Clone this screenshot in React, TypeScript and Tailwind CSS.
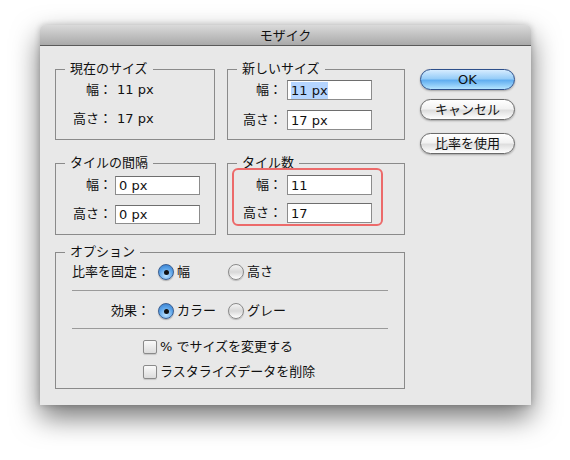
const FONT = "font-['DejaVu_Sans','Noto_Sans_CJK_JP',sans-serif]";

function Field({ label, value, selected }: { label: string; value: string; selected?: boolean }) {
  return (
    <div className="flex items-center h-[20px]">
      <span className="w-[54px] text-right shrink-0">{label}</span>
      <div className="ml-[5px] w-[85px] h-[20px] bg-white border border-[#8c8c8c] border-t-[#6e6e6e] flex items-center pl-[3px] leading-none">
        <span className={selected ? 'bg-[#b5d5ff] py-[2px]' : ''}>{value}</span>
      </div>
    </div>
  );
}

function Group({ title, width, children }: { title: string; width: string; children: React.ReactNode }) {
  return (
    <fieldset className={`${width} border border-[#8a8a8a] relative`}>
      <legend className="ml-[9px] px-[5px] leading-[16px]">{title}</legend>
      {children}
    </fieldset>
  );
}

function Radio({ checked, label, width }: { checked?: boolean; label: string; width?: string }) {
  return (
    <div className={`flex items-center ${width ?? ''}`}>
      {checked ? (
        <span className="w-[16px] h-[16px] rounded-full border border-[#3a5f92] bg-[radial-gradient(circle_at_50%_75%,#bfe4ff_0%,#5ba3e8_55%,#2f78cc_100%)] flex items-center justify-center shadow-[0_1px_1px_rgba(0,0,0,0.25)]">
          <span className="w-[5px] h-[5px] rounded-full bg-[#111]" />
        </span>
      ) : (
        <span className="w-[16px] h-[16px] rounded-full border border-[#8a8a8a] bg-[linear-gradient(#f4f4f4,#d8d8d8_50%,#ffffff)] shadow-[0_1px_1px_rgba(0,0,0,0.2)]" />
      )}
      <span className="ml-[3px]">{label}</span>
    </div>
  );
}

function Check({ label }: { label: string }) {
  return (
    <div className="flex items-center h-[20px] pl-[71px]">
      <span className="w-[14px] h-[14px] rounded-[2px] border border-[#8a8a8a] bg-[linear-gradient(#fafafa,#dcdcdc)] shadow-[0_1px_1px_rgba(0,0,0,0.15)]" />
      <span className="ml-[3px]">{label}</span>
    </div>
  );
}

function AquaButton({ label, primary }: { label: string; primary?: boolean }) {
  return (
    <button
      type="button"
      className={`w-[95px] h-[21px] rounded-full border text-[13px] leading-none shadow-[0_1px_2px_rgba(0,0,0,0.3)] ${
        primary
          ? 'border-[#2d4f8a] bg-[linear-gradient(#d6ecff_0%,#97cdf8_45%,#62aef0_55%,#b4e4ff_100%)]'
          : 'border-[#6a6a6a] bg-[linear-gradient(#ffffff_0%,#f2f2f2_45%,#dedede_55%,#ffffff_100%)]'
      }`}
    >
      {label}
    </button>
  );
}

export default function App() {
  return (
    <div className={`w-[570px] h-[460px] bg-white pt-[25px] pl-[40px] ${FONT} text-[13px] text-[#111]`}>
      <div className="w-[491px] h-[380px] rounded-t-[5px] bg-[#e8e8e8] shadow-[0_12px_28px_rgba(0,0,0,0.55),0_0_6px_rgba(0,0,0,0.2)] flex flex-col">
        {/* title bar */}
        <div className="h-[21px] rounded-t-[5px] bg-[linear-gradient(#dadada,#a9a9a9)] border-b border-[#5a5a5a] flex items-center justify-center">
          <span className="text-[13px] leading-none">モザイク</span>
        </div>

        <div className="flex pt-[15px] pl-[15px]">
          {/* left column */}
          <div className="flex flex-col w-[350px]">
            <div className="flex gap-[12px]">
              <Group title="現在のサイズ" width="w-[160px]">
                <div className="pt-[3px] pb-[9px] flex flex-col gap-[9px]">
                  <div className="flex items-center h-[20px]">
                    <span className="w-[56px] text-right">幅：</span>
                    <span className="ml-[5px]">11 px</span>
                  </div>
                  <div className="flex items-center h-[20px]">
                    <span className="w-[56px] text-right">高さ：</span>
                    <span className="ml-[5px]">17 px</span>
                  </div>
                </div>
              </Group>
              <Group title="新しいサイズ" width="w-[178px]">
                <div className="pt-[3px] pb-[9px] flex flex-col gap-[10px]">
                  <Field label="幅：" value="11 px" selected />
                  <Field label="高さ：" value="17 px" />
                </div>
              </Group>
            </div>

            <div className="flex gap-[11px] mt-[15px]">
              <Group title="タイルの間隔" width="w-[161px]">
                <div className="pt-[4px] pb-[10px] flex flex-col gap-[9px]">
                  <div className="flex items-center h-[20px]">
                    <span className="w-[56px] text-right shrink-0">幅：</span>
                    <div className="ml-[3px] w-[85px] h-[19px] bg-white border border-[#8c8c8c] border-t-[#6e6e6e] flex items-center pl-[3px] leading-none">0 px</div>
                  </div>
                  <div className="flex items-center h-[20px]">
                    <span className="w-[56px] text-right shrink-0">高さ：</span>
                    <div className="ml-[3px] w-[85px] h-[19px] bg-white border border-[#8c8c8c] border-t-[#6e6e6e] flex items-center pl-[3px] leading-none">0 px</div>
                  </div>
                </div>
              </Group>
              <Group title="タイル数" width="w-[178px]">
                <div className="relative pt-[4px] pb-[10px] flex flex-col gap-[8px]">
                  <Field label="幅：" value="11" />
                  <Field label="高さ：" value="17" />
                  <div className="absolute left-[4px] top-[-3px] w-[151px] h-[58px] rounded-[6px] border-2 border-[#ec6a6a] pointer-events-none" />
                </div>
              </Group>
            </div>

            <fieldset className="mt-[9px] border border-[#8a8a8a]">
              <legend className="ml-[9px] px-[5px] leading-[16px]">オプション</legend>
              <div className="flex flex-col px-[16px] pt-[2px] pb-[6px]">
                <div className="flex items-center h-[20px]">
                  <span className="w-[78px] mr-[8px] text-right">比率を固定：</span>
                  <Radio checked label="幅" width="w-[70px]" />
                  <Radio label="高さ" />
                </div>
                <div className="h-px bg-[#9a9a9a] mt-[8px]" />
                <div className="flex items-center h-[20px] mt-[10px]">
                  <span className="w-[78px] mr-[8px] text-right">効果：</span>
                  <Radio checked label="カラー" width="w-[70px]" />
                  <Radio label="グレー" />
                </div>
                <div className="h-px bg-[#9a9a9a] mt-[7px]" />
                <div className="mt-[8px] flex flex-col gap-[5px]">
                  <Check label="% でサイズを変更する" />
                  <Check label="ラスタライズデータを削除" />
                </div>
              </div>
            </fieldset>
          </div>

          {/* buttons */}
          <div className="ml-[15px] pt-[8px] flex flex-col">
            <AquaButton label="OK" primary />
            <div className="h-[9px]" />
            <AquaButton label="キャンセル" />
            <div className="h-[13px]" />
            <AquaButton label="比率を使用" />
          </div>
        </div>
      </div>
    </div>
  );
}
